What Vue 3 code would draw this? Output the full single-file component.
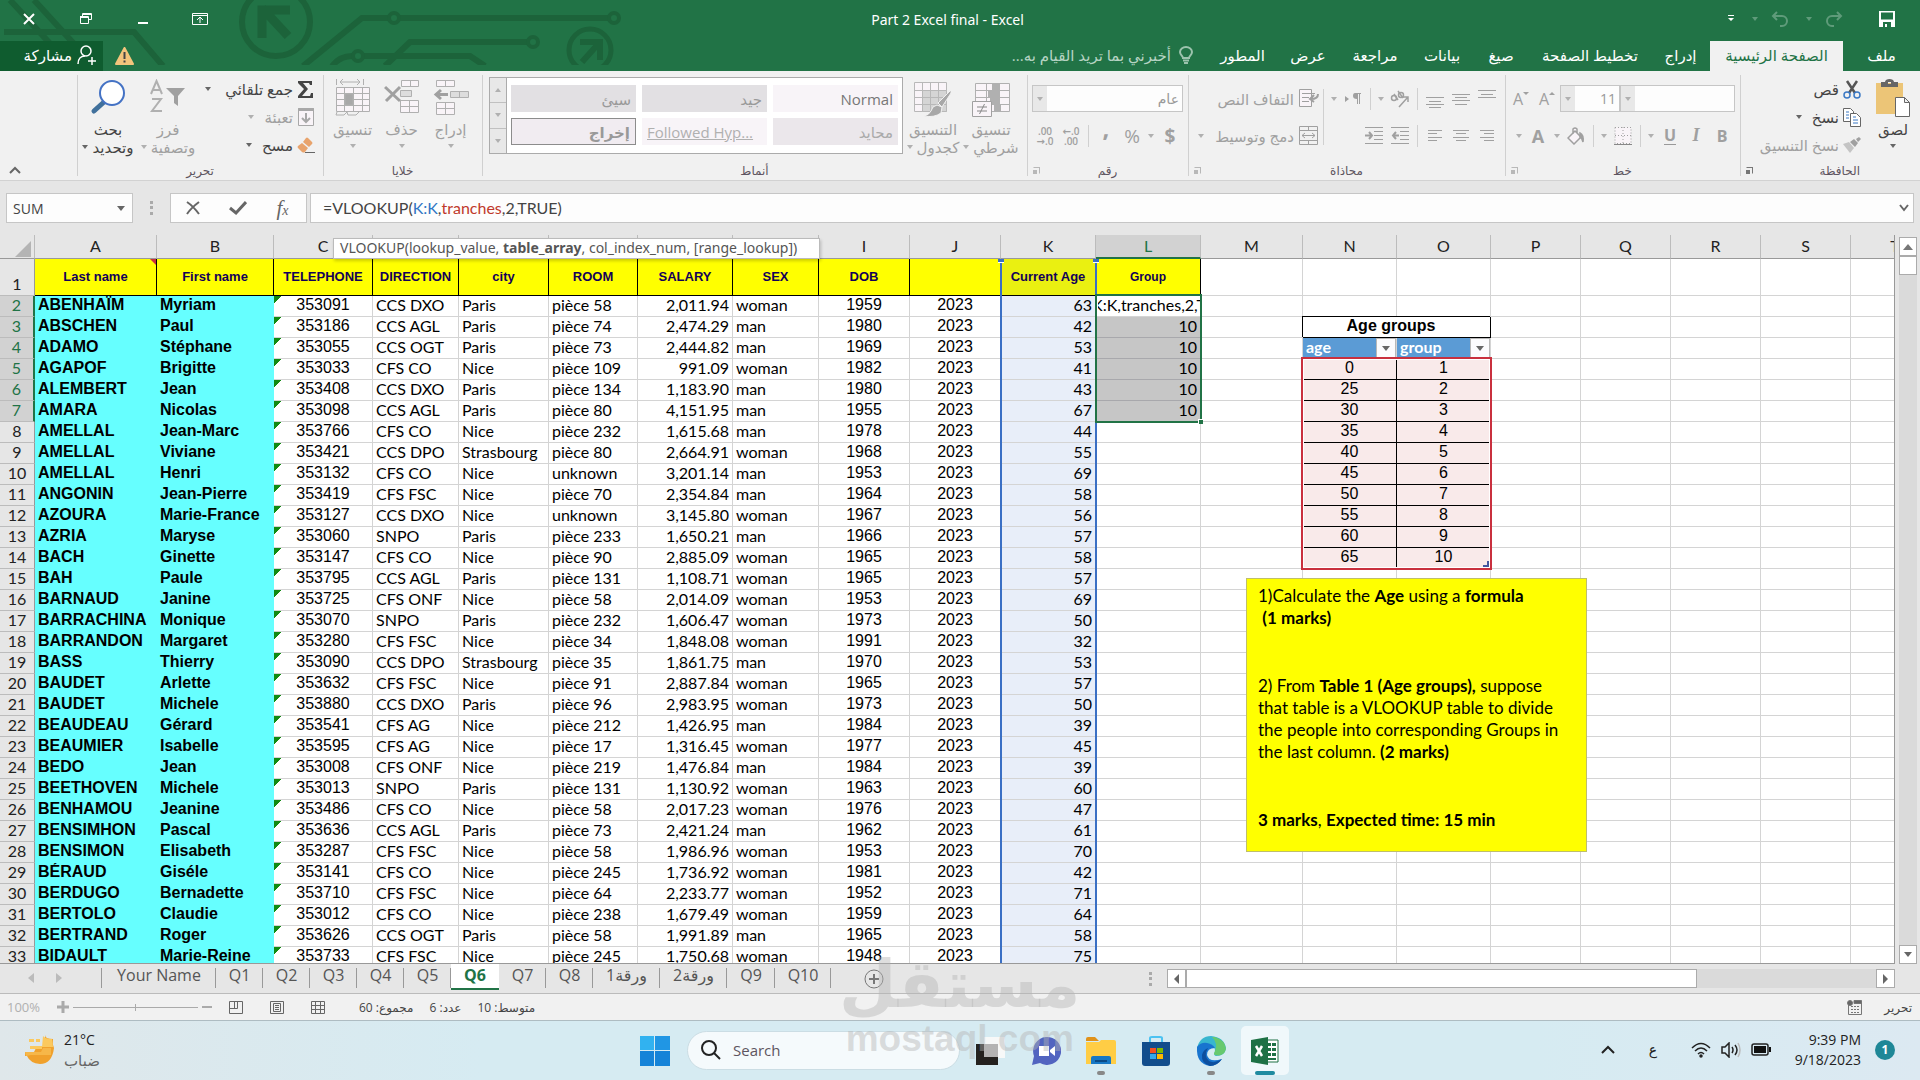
<script setup>
const cols = [
  ['A', 122], ['B', 117], ['C', 99], ['D', 86], ['E', 90], ['F', 89], ['G', 95], ['H', 86], ['I', 91], ['J', 91],
  ['K', 95], ['L', 105], ['M', 102], ['N', 94], ['O', 94], ['P', 90], ['Q', 90], ['R', 90], ['S', 90], ['T', 0],
]
const heads = ['Last name', 'First name', 'TELEPHONE', 'DIRECTION', 'city', 'ROOM', 'SALARY', 'SEX', 'DOB', '', 'Current Age', 'Group']

const people = `ABENHAÏM|Myriam|353091|CCS DXO|Paris|pièce 58|2,011.94|woman|1959|63
ABSCHEN|Paul|353186|CCS AGL|Paris|pièce 74|2,474.29|man|1980|42
ADAMO|Stéphane|353055|CCS OGT|Paris|pièce 73|2,444.82|man|1969|53
AGAPOF|Brigitte|353033|CFS CO|Nice|pièce 109|991.09|woman|1982|41
ALEMBERT|Jean|353408|CCS DXO|Paris|pièce 134|1,183.90|man|1980|43
AMARA|Nicolas|353098|CCS AGL|Paris|pièce 80|4,151.95|man|1955|67
AMELLAL|Jean-Marc|353766|CFS CO|Nice|pièce 232|1,615.68|man|1978|44
AMELLAL|Viviane|353421|CCS DPO|Strasbourg|pièce 80|2,664.91|woman|1968|55
AMELLAL|Henri|353132|CFS CO|Nice|unknown|3,201.14|man|1953|69
ANGONIN|Jean-Pierre|353419|CFS FSC|Nice|pièce 70|2,354.84|man|1964|58
AZOURA|Marie-France|353127|CCS DXO|Nice|unknown|3,145.80|woman|1967|56
AZRIA|Maryse|353060|SNPO|Paris|pièce 233|1,650.21|man|1966|57
BACH|Ginette|353147|CFS CO|Nice|pièce 90|2,885.09|woman|1965|58
BAH|Paule|353795|CCS AGL|Paris|pièce 131|1,108.71|woman|1965|57
BARNAUD|Janine|353725|CFS ONF|Nice|pièce 58|2,014.09|woman|1953|69
BARRACHINA|Monique|353070|SNPO|Paris|pièce 232|1,606.47|woman|1973|50
BARRANDON|Margaret|353280|CFS FSC|Nice|pièce 34|1,848.08|woman|1991|32
BASS|Thierry|353090|CCS DPO|Strasbourg|pièce 35|1,861.75|man|1970|53
BAUDET|Arlette|353632|CFS FSC|Nice|pièce 91|2,887.84|woman|1965|57
BAUDET|Michele|353880|CCS DXO|Paris|pièce 96|2,983.95|woman|1973|50
BEAUDEAU|Gérard|353541|CFS AG|Nice|pièce 212|1,426.95|man|1984|39
BEAUMIER|Isabelle|353595|CFS AG|Nice|pièce 17|1,316.45|woman|1977|45
BEDO|Jean|353008|CFS ONF|Nice|pièce 219|1,476.84|man|1984|39
BEETHOVEN|Michele|353013|SNPO|Paris|pièce 131|1,130.92|woman|1963|60
BENHAMOU|Jeanine|353486|CFS CO|Nice|pièce 58|2,017.23|woman|1976|47
BENSIMHON|Pascal|353636|CCS AGL|Paris|pièce 73|2,421.24|man|1962|61
BENSIMON|Elisabeth|353287|CFS FSC|Nice|pièce 58|1,986.96|woman|1953|70
BÉRAUD|Giséle|353141|CFS CO|Nice|pièce 245|1,736.92|woman|1981|42
BERDUGO|Bernadette|353710|CFS FSC|Nice|pièce 64|2,233.77|woman|1952|71
BERTOLO|Claudie|353012|CFS CO|Nice|pièce 238|1,679.49|woman|1959|64
BERTRAND|Roger|353626|CCS OGT|Paris|pièce 58|1,991.89|man|1965|58
BIDAULT|Marie-Reine|353733|CFS FSC|Nice|pièce 245|1,750.68|woman|1948|75`.split('\n').map(l => l.split('|'))

const ages = [0, 25, 30, 35, 40, 45, 50, 55, 60, 65]

function cellText(row, col, p) {
  if (col < 9) return p[col]
  if (col === 9) return '2023'
  if (col === 10) return p[9]
  if (col === 11 && row > 2 && row < 8) return '10'
  if (col === 13 && row > 4 && row < 15) return String(ages[row - 5])
  if (col === 14 && row > 4 && row < 15) return String(row - 4)
  return ''
}
function cellClass(row, col) {
  return {
    name: col < 2,
    num: col === 2 || col === 8 || col === 9,
    flag: col === 2,
    right: col === 6 || col === 10 || col === 11,
    age: col === 10,
    picked: col === 11 && row > 2 && row < 8,
    lookup: (col === 13 || col === 14) && row > 4 && row < 15,
  }
}

const tabs = [['إدراج', 59], ['تخطيط الصفحة', 122], ['صيغ', 56], ['بيانات', 62], ['مراجعة', 72], ['عرض', 62], ['المطور', 69]]
const sheets = [['Your Name', 114], ['Q1', 47], ['Q2', 47], ['Q3', 47], ['Q4', 47], ['Q5', 47], ['Q6', 48], ['Q7', 47], ['Q8', 47], ['ورقة1', 67], ['ورقة2', 67], ['Q9', 48], ['Q10', 56]]
</script>

<template>
  <div class="app">
    <header class="title">
      <svg class="art" viewBox="0 0 640 65" width="640" height="65" fill="none" stroke="#1c633a" stroke-width="6">
        <path d="M10 0L56 50M34 0L76 46M4 32H134L163 66M303 66L362 18H388M400 18H608M385 66L410 42H527M332 66Q340 56 352 56M364 56H470L485 66" />
        <circle cx="394" cy="18" r="5" stroke-width="4" /><circle cx="614" cy="18" r="5" stroke-width="4" />
        <circle cx="533" cy="42" r="5" stroke-width="4" /><circle cx="358" cy="56" r="5" stroke-width="4" />
        <circle cx="276" cy="22" r="34" /><path d="M262 38V10H290M262 8L288 36" stroke-width="9" />
        <circle cx="590" cy="50" r="21" stroke-width="5" /><path d="M580 42H600V60M600 42L582 62" stroke-width="6" />
      </svg>
      <div class="caption">
        <div class="wins">
          <button type="button" aria-label="Close"><svg width="16" height="16" viewBox="0 0 16 16" stroke="#fff" stroke-width="2"><path d="M3 3l10 10M13 3L3 13" /></svg></button>
          <button type="button" aria-label="Restore"><svg width="16" height="16" viewBox="0 0 16 16" fill="none" stroke="#fff"><path d="M4.500 5V2.500h9v6H11M2 5.500h8.500v7H2.500v-7M2.500 6.500h8M5 3.500h8" /></svg></button>
          <button type="button" aria-label="Minimize"><svg width="16" height="16" viewBox="0 0 16 16"><path d="M3 11h10v2H3z" fill="#fff" /></svg></button>
          <button type="button" aria-label="Ribbon options"><svg width="16" height="16" viewBox="0 0 16 16" fill="none" stroke="#fff"><path d="M.5 2.500h15v11H.5zM.5 4.500h15M8 12V6.500M5 9l3-3 3 3" /></svg></button>
        </div>
        <h1>Part 2 Excel final - Excel</h1>
        <div class="quick">
          <button type="button" aria-label="Customize"><svg width="8" height="10" viewBox="0 0 8 10" fill="#fff"><path d="M1 1h6v1H1zM1 4h6L4 7z" /></svg></button>
          <button type="button" class="dim undo" aria-label="Undo"><i class="caret"></i><svg width="18" height="16" viewBox="0 0 18 16" fill="none" stroke="currentColor" stroke-width="2"><path d="M6 1L2 5l4 4M2 5h9a5 5 0 010 10H9" /></svg></button>
          <button type="button" class="dim undo" aria-label="Redo"><i class="caret"></i><svg width="18" height="16" viewBox="0 0 18 16" fill="none" stroke="currentColor" stroke-width="2"><path d="M12 1l4 4-4 4M16 5H7a5 5 0 000 10h2" /></svg></button>
          <button type="button" class="save" aria-label="Save"><svg width="16" height="16" viewBox="0 0 16 16"><path fill="#fff" fill-rule="evenodd" d="M0 0h16v16H0zM2 1.500v7h12v-7zM4 11v5h2v-3h2v3h4v-5z" /></svg></button>
        </div>
      </div>
      <nav class="tabs" dir="rtl">
        <button type="button" class="file">ملف</button>
        <button type="button" class="tab on">الصفحة الرئيسية</button>
        <button v-for="t in tabs" :key="t[0]" type="button" class="tab" :style="{ width: t[1] + 'px' }">{{ t[0] }}</button>
        <button type="button" class="tell">
          <svg width="14" height="18" viewBox="0 0 14 18" fill="none" stroke="#9cc3ad" stroke-width="2"><path d="M4 12C4 10 1 9 1 6a6 5 0 0112 0c0 3-3 4-3 6zM4 14.500h6M5 17h4" /></svg>
          <span>أخبرني بما تريد القيام به...</span>
        </button>
        <span class="grow"></span>
        <button type="button" class="warn" aria-label="Warning"><svg width="19" height="18" viewBox="0 0 19 18"><path d="M9.500 1L18 17H1z" fill="#f3c47c" stroke="#f3c47c" stroke-width="2" stroke-linejoin="round" /><path d="M8.500 5h2v7h-2zM8.500 13.500h2v2h-2z" fill="#444" /></svg></button>
        <button type="button" class="share">
          <svg width="20" height="20" viewBox="0 0 20 20" fill="none" stroke="#fff" stroke-width="1.500"><circle cx="9" cy="6" r="5" /><path d="M1 19c0-5 3-8 7-8M15 12v8M11 16h8" /></svg>
          <span>مشاركة</span>
        </button>
      </nav>
    </header>

    <section class="ribbon" dir="rtl">
      <div class="group clip">
        <div class="body">
          <button type="button" class="big">
            <svg width="34" height="38" viewBox="0 0 34 38"><path fill="#ecc577" d="M0 4h27v31H0z" /><path fill="#666" d="M5 3h4c0-4 9-4 9 0h4v5H5zM12 3v2h3V3z" /><path fill="#fff" stroke="#666" d="M19.500 18.500h9l5 5v14h-14zM28.500 18.500v5h5" /></svg>
            <span>لصق</span><i class="caret"></i>
          </button>
          <div class="stack">
            <button type="button"><svg width="18" height="19" viewBox="0 0 18 19" fill="none"><path d="M4 1l8 12M14 1L6 13" stroke="#555" stroke-width="2.500" /><circle cx="4" cy="15" r="3" stroke="#3b79c4" stroke-width="1.500" /><circle cx="14" cy="15" r="3" stroke="#3b79c4" stroke-width="1.500" /></svg><span>قص</span></button>
            <button type="button"><svg width="18" height="19" viewBox="0 0 18 19" fill="#fff" stroke="#666"><path d="M.5.5h7l3 3v10H.5z" /><path d="M7.500 5.500h6l4 4v9h-10z" /><path stroke="#3b79c4" d="M3 4h3M3 7h3M3 10h3M10 9h3M10 12h5M10 15h5" /></svg><span>نسخ</span><i class="caret"></i></button>
            <button type="button" class="off"><svg width="18" height="16" viewBox="0 0 18 16"><path fill="#c4c4c4" d="M0 7l6-2 5 6-4 5z" /><path fill="#a0a0a0" d="M7 5l4-3 4 4-3 4zM13 2l3-2 2 2-3 3z" /></svg><span>نسخ التنسيق</span></button>
          </div>
        </div>
        <footer><span>الحافظة</span><i class="launch dark"></i></footer>
      </div>

      <div class="group font">
        <div class="body rows">
          <div class="line">
            <span class="combo name"><input type="text" aria-label="Font name" value=""><button type="button" aria-label="Fonts"><i class="caret"></i></button></span>
            <span class="combo size"><input type="text" aria-label="Font size" value="11"><button type="button" aria-label="Sizes"><i class="caret"></i></button></span>
            <button type="button" class="ic"><svg width="6" height="14" viewBox="0 0 6 14"><path d="M0 3h6L3 0z" fill="#a0a0a0" /></svg><span>A</span></button>
            <button type="button" class="ic"><svg width="6" height="14" viewBox="0 0 6 14"><path d="M0 0h6L3 3z" fill="#a0a0a0" /></svg><span>A</span></button>
          </div>
          <div class="line">
            <button type="button" class="ic"><b>B</b></button><button type="button" class="ic"><b class="it">I</b></button><button type="button" class="ic"><b class="un">U</b></button>
            <button type="button" class="dd" aria-label="Underline"><i class="caret"></i></button><i class="sep"></i>
            <button type="button" class="ic" aria-label="Borders"><svg width="18" height="18" viewBox="0 0 18 18" fill="none" stroke="#a0a0a0"><path fill="#f9f4f8" stroke-dasharray="1 2" d="M1 .5h16v16H1zM9 0v16M1 8.500h16" /><path stroke="#888" d="M0 17.500h18" /></svg></button>
            <button type="button" class="dd" aria-label="Border types"><i class="caret"></i></button><i class="sep"></i>
            <button type="button" class="ic" aria-label="Fill"><svg width="18" height="18" viewBox="0 0 18 18" fill="#f9f4f8" stroke="#a0a0a0" stroke-width="1.500"><path d="M1 11l7-7 6 6-7 7zM6 7V2q2-2 4 0v4" /><path fill="#a0a0a0" d="M13 6q4 2 3 9-1-4-3-5z" /></svg></button>
            <button type="button" class="dd" aria-label="Fill colours"><i class="caret"></i></button>
            <button type="button" class="ic"><b class="col">A</b></button><button type="button" class="dd" aria-label="Font colours"><i class="caret"></i></button>
          </div>
        </div>
        <footer><span>خط</span><i class="launch"></i></footer>
      </div>

      <div class="group align">
        <div class="body rows">
          <div class="wrap">
            <div class="tools">
              <div class="line">
                <button type="button" class="ic" aria-label="Top"><svg width="18" height="18" viewBox="0 0 18 18" stroke="#a0a0a0"><path d="M0 .5h18M3 4.500h12M0 7.500h18" /></svg></button>
                <button type="button" class="ic" aria-label="Middle"><svg width="18" height="18" viewBox="0 0 18 18" stroke="#a0a0a0"><path d="M0 4.500h18M3 7.500h12M0 10.500h18M3 14.500h12" /></svg></button>
                <button type="button" class="ic" aria-label="Bottom"><svg width="18" height="18" viewBox="0 0 18 18" stroke="#a0a0a0"><path d="M0 7.500h18M3 11.500h12M0 14.500h18M3 17.500h12" /></svg></button>
                <i class="sep"></i>
                <button type="button" class="ic" aria-label="Orientation"><svg width="20" height="18" viewBox="0 0 20 18" fill="none" stroke="#a0a0a0" stroke-width="1.500"><circle cx="4" cy="8" r="2.500" /><path d="M4 4l4 6M8 1l5 7" /><circle cx="11" cy="5" r="2.500" /><path d="M9 17l9-10M13 7h5v5" /></svg></button>
                <button type="button" class="dd" aria-label="Orientations"><i class="caret"></i></button><i class="sep"></i>
                <button type="button" class="ic" aria-label="Direction"><svg width="18" height="14" viewBox="0 0 18 14" fill="#a0a0a0"><path d="M1 4l4 3-4 3zM11 1h6v1h-1v10h-1V2h-1v10h-1V7q-4 0-4-3t2-3z" /></svg></button>
                <button type="button" class="dd" aria-label="Directions"><i class="caret"></i></button>
              </div>
              <div class="line">
                <button type="button" class="ic" aria-label="Align right"><svg width="14" height="13" viewBox="0 0 14 13" stroke="#a0a0a0"><path d="M0 1.500h14M4 4.500h10M0 8.500h14M4 11.500h10" /></svg></button>
                <button type="button" class="ic" aria-label="Centre"><svg width="16" height="13" viewBox="0 0 16 13" stroke="#a0a0a0"><path d="M0 1.500h16M3 4.500h10M0 8.500h16M3 11.500h10" /></svg></button>
                <button type="button" class="ic" aria-label="Align left"><svg width="14" height="13" viewBox="0 0 14 13" stroke="#a0a0a0"><path d="M0 1.500h14M0 4.500h9M0 8.500h14M0 11.500h9" /></svg></button>
                <i class="sep"></i>
                <button type="button" class="ic" aria-label="Decrease indent"><svg width="18" height="17" viewBox="0 0 18 17" fill="none" stroke="#a0a0a0"><path d="M0 .5h18M9 4.500h9M9 8.500h9M9 12.500h9M0 16.500h18" /><path stroke-width="2" d="M8 8.500H2M5 5L2 8.500 5 12" /></svg></button>
                <button type="button" class="ic" aria-label="Increase indent"><svg width="18" height="17" viewBox="0 0 18 17" fill="none" stroke="#a0a0a0"><path d="M0 .5h18M9 4.500h9M9 8.500h9M9 12.500h9M0 16.500h18" /><path stroke-width="2" d="M0 8.500h6M4 5l3 3.500L4 12" /></svg></button>
              </div>
            </div>
            <i class="sep tall"></i>
            <div class="tools">
              <button type="button" class="line word off"><svg width="20" height="19" viewBox="0 0 20 19" fill="#f9f4f8" stroke="#a0a0a0"><path d="M.5.5h12v17H.5zM3 4.500h13M3 8.500h7M3 12.500h7" /><path fill="none" stroke-width="2" d="M19 5q0 5-7 5M15 6l-4 4 4 3" /></svg><span>التفاف النص</span></button>
              <button type="button" class="line word off"><svg width="20" height="19" viewBox="0 0 20 19" fill="none" stroke="#a0a0a0"><path d="M.5.5h18v18H.5zM.5 4.500h18M.5 14.500h18M9.500 0v5M9.500 14v5M3 9.500h13M6 7L3 9.500 6 12M13 7l3 2.500-3 2.500" /></svg><span>دمج وتوسيط</span><i class="caret"></i></button>
            </div>
          </div>
        </div>
        <footer><span>محاذاة</span><i class="launch"></i></footer>
      </div>

      <div class="group number">
        <div class="body rows">
          <div class="line"><span class="combo fmt"><input type="text" aria-label="Number format" value="عام"><button type="button" aria-label="Formats"><i class="caret"></i></button></span></div>
          <div class="line">
            <button type="button" class="ic"><b class="cur">$</b></button><button type="button" class="dd" aria-label="Currencies"><i class="caret"></i></button>
            <button type="button" class="ic"><span class="cur">%</span></button><button type="button" class="ic"><b class="com">,</b></button><i class="sep"></i>
            <button type="button" class="ic dec"><span dir="ltr">←.0<br>.00</span></button><button type="button" class="ic dec"><span dir="ltr">.00<br>→.0</span></button>
          </div>
        </div>
        <footer><span>رقم</span><i class="launch"></i></footer>
      </div>

      <div class="group styles">
        <div class="body">
          <button type="button" class="big off wide">
            <svg width="38" height="38" viewBox="0 0 38 38" fill="#f9f4f8" stroke="#b0b0b0"><path d="M3.500 4.500h34v28h-34z" /><path fill="#b0b0b0" stroke="none" d="M20 5h7v7h-7zM16 12h11v7H16zM18 19h10v7H18zM22 26h7v6h-7z" /><path fill="none" d="M3 11.500h34M3 18.500h34M3 25.500h34M14.500 4v28M27.500 4v28" /><path stroke="#a0a0a0" d="M.5 22.500h19v15H.5z" /><path stroke="#888" fill="none" d="M5 28h10M5 32h10M12.500 25l-5 10" /></svg>
            <span>تنسيق</span><span class="w">شرطي<i class="caret"></i></span>
          </button>
          <button type="button" class="big off wide">
            <svg width="38" height="38" viewBox="0 0 38 38" fill="#f9f4f8" stroke="#b8b8b8"><path d="M.5 3.500h32v29H.5z" /><path fill="#d5d5d5" d="M8.500 11.500h24v21h-24z" /><path fill="none" d="M0 11.500h32M0 18.500h32M0 25.500h32M8.500 3v29M16.500 3v29M24.500 3v29" /><path fill="#a8a8a8" stroke="#f1f1f1" d="M37 11L24 24l4 4 9-14zM23 26q-5 1-6 6-2 4-7 5 10 2 17-3l1-6z" /></svg>
            <span>التنسيق</span><span class="w">كجدول<i class="caret"></i></span>
          </button>
          <div class="gallery">
            <div class="samples">
              <button type="button" dir="ltr" class="norm">Normal</button><button type="button" class="good">جيد</button><button type="button" class="good">سيئ</button>
              <button type="button" class="neu">محايد</button><button type="button" dir="ltr" class="hyp">Followed Hyp...</button><button type="button" class="out">إخراج</button>
            </div>
            <div class="spin"><button type="button" aria-label="Up"><i class="caret up"></i></button><button type="button" aria-label="Down"><i class="caret"></i></button><button type="button" aria-label="More"><i class="caret more"></i></button></div>
          </div>
        </div>
        <footer><span>أنماط</span></footer>
      </div>

      <div class="group cells">
        <div class="body">
          <button type="button" class="big off"><svg width="36" height="38" viewBox="0 0 36 38" fill="#f9f4f8" stroke="#b0b0b0"><path d="M3.500 1.500h18v6h-18zM12.500 1v7M3.500 23.500h18v12h-18zM12.500 23v12M3 29.500h18" /><path fill="#ddd" d="M17.500 12.500h18v6h-18zM26.500 12v7" /><path fill="none" stroke="#a0a0a0" stroke-width="3" d="M15 15.500H3M8 11l-5 4.500L8 20" /></svg><span>إدراج</span><i class="caret"></i></button>
          <button type="button" class="big off"><svg width="36" height="38" viewBox="0 0 36 38" fill="#f9f4f8" stroke="#b0b0b0"><path d="M17.500 1.500h17v6h-17zM26.500 1v7M16.500 21.500h18v12h-18zM25.500 21v12M16 27.500h18" /><path fill="#ddd" d="M16.500 11.500h11v6h-11z" /><path fill="none" stroke="#a0a0a0" stroke-width="3" d="M1 8l15 14M16 8L2 22" /></svg><span>حذف</span><i class="caret"></i></button>
          <button type="button" class="big off"><svg width="36" height="38" viewBox="0 0 36 38" fill="#f9f4f8" stroke="#b0b0b0"><path d="M1.500 8.500h33v24h-33z" /><path fill="none" d="M1 14.500h33M1 20.500h33M1 26.500h33M9.500 8v24M18.500 8v24M27.500 8v24M2 33l-1 3h8l3-3 1 3h8l3-3M1.500 0v6M28.500 0v6M5 3h20M8 0L5 3l3 3M22 0l3 3-3 3" /><path fill="#a8a8a8" d="M10 15h8v11h-8z" /></svg><span>تنسيق</span><i class="caret"></i></button>
        </div>
        <footer><span>خلايا</span></footer>
      </div>

      <div class="group editing">
        <div class="body">
          <div class="stack">
            <button type="button"><svg width="18" height="17" viewBox="0 0 18 17"><path d="M1 0h14v4h-2l-1-2H6l5 6-6 7h8l1-3h2v5H1v-2l6-7-6-6z" fill="#444" /></svg><span>جمع تلقائي</span><i class="caret wide-gap"></i></button>
            <button type="button" class="off"><svg width="18" height="18" viewBox="0 0 18 18" fill="#f9f4f8" stroke="#a8a8a8"><path d="M1.500.5h15v17h-15z" /><path fill="#a8a8a8" d="M1.500.5h15v2h-15z" /><path fill="none" stroke-width="2" d="M9 5v9M5 10l4 4 4-4" /></svg><span>تعبئة</span><i class="caret"></i></button>
            <button type="button"><svg width="18" height="17" viewBox="0 0 18 17"><path d="M9 1q1-1 2 0l4 4q1 1 0 2l-3 3-6-5z" fill="#e8a36c" /><path d="M5 6l6 5-3 4q-1 1-3 0l-4-4q-1-1 0-2z" fill="#e8a36c" /><path d="M8 15.500h10" stroke="#666" /></svg><span>مسح</span><i class="caret"></i></button>
          </div>
          <button type="button" class="big off sort"><svg width="36" height="38" viewBox="0 0 36 38"><path fill="none" stroke="#b0b0b0" stroke-width="2" d="M1 15L6.500 2 12 15M3 11h7M2 20h9L2 32h10" /><path fill="#a0a0a0" d="M16 9h19l-7 8v10l-4-3v-7z" /></svg><span>فرز</span><span class="w">وتصفية<i class="caret"></i></span></button>
          <button type="button" class="big find"><svg width="36" height="38" viewBox="0 0 36 38"><path stroke="#41719c" stroke-width="5" stroke-linecap="round" d="M4 32l10-9" /><circle cx="22" cy="14" r="12" fill="#fff" stroke="#4472c4" stroke-width="2" /></svg><span>بحث</span><span class="w">وتحديد<i class="caret"></i></span></button>
        </div>
        <footer><span>تحرير</span></footer>
      </div>
      <span class="grow"></span>
      <button type="button" class="fold" aria-label="Collapse ribbon"><svg width="12" height="8" viewBox="0 0 12 8" fill="none" stroke="#666" stroke-width="2"><path d="M1 7l5-5 5 5" /></svg></button>
    </section>

    <section class="fbar">
      <div class="namebox"><input type="text" aria-label="Name box" value="SUM"><button type="button" aria-label="Names"><i class="caret dk"></i></button></div>
      <i class="dots"></i>
      <div class="fbtns">
        <button type="button" aria-label="Cancel"><svg width="16" height="16" viewBox="0 0 16 16" stroke="#666" stroke-width="2" fill="none"><path d="M2 2q6 4 12 12M14 2Q6 8 2 14" /></svg></button>
        <button type="button" aria-label="Enter"><svg width="18" height="16" viewBox="0 0 18 16" stroke="#666" stroke-width="3" fill="none"><path d="M1 8l6 5L17 2" /></svg></button>
        <button type="button" class="fx" aria-label="Insert function">f<small>x</small></button>
      </div>
      <div class="formula"><div role="textbox" aria-label="Formula" contenteditable="true">=VLOOKUP(<span class="blue">K:K</span>,<span class="red">tranches</span>,2,TRUE)</div><button type="button" aria-label="Expand"><svg width="10" height="8" viewBox="0 0 10 8" fill="none" stroke="#666" stroke-width="2"><path d="M1 1l4 5 4-5" /></svg></button></div>
    </section>

    <main class="work">
      <div class="sheet">
        <table class="grid">
          <colgroup><col class="c0"><col v-for="c in cols" :key="c[0]" :style="c[1] ? { width: c[1] + 'px' } : {}"></colgroup>
          <thead>
            <tr><th class="corner"><svg width="16" height="16" viewBox="0 0 16 16"><path d="M16 0v16H0z" fill="#b4b4b4" /></svg></th><th v-for="c in cols" :key="c[0]" scope="col" :class="{ on: c[0] === 'L' }">{{ c[0] }}</th></tr>
          </thead>
          <tbody>
            <tr class="first"><th scope="row">1</th><td v-for="(c, i) in cols" :key="i" :class="{ head: i < 12, cur: i === 10, small: i === 11 }"><i v-if="i === 0" class="mark"></i>{{ heads[i] }}</td></tr>
            <tr v-for="(p, r) in people" :key="r">
              <th scope="row" :class="{ on: r < 6 }">{{ r + 2 }}</th>
              <template v-for="(c, i) in cols" :key="i">
                <td v-if="r === 1 && i === 13" colspan="2" class="tt">Age groups</td>
                <td v-else-if="r === 2 && (i === 13 || i === 14)" class="filter"><div><span>{{ i === 13 ? 'age' : 'group' }}</span><button type="button" aria-label="Filter"><i class="caret dk"></i></button></div></td>
                <td v-else-if="!(r === 1 && i === 14)" :class="cellClass(r + 2, i)">{{ cellText(r + 2, i, p) }}</td>
              </template>
            </tr>
          </tbody>
        </table>
        <div class="krange"><i></i><i></i></div>
        <div class="edit"><span>K:K,tranches,2,T</span></div>
        <div class="lrange"></div>
        <div class="rrange"></div>
        <div class="tip">VLOOKUP(lookup_value, <b>table_array</b>, col_index_num, [range_lookup])</div>
        <aside class="note">
          <p>1)Calculate the <b>Age</b> using a <b>formula</b><br>&nbsp;<b>(1 marks)</b></p>
          <p>2) From <b>Table 1 (Age groups),</b> suppose<br>that table is a VLOOKUP table to divide<br>the people into corresponding Groups in<br>the last column. <b>(2 marks)</b></p>
          <p><b>3 marks</b>, <b>Expected time: 15 min</b></p>
        </aside>
      </div>
      <div class="vscroll"><button type="button" aria-label="Scroll up"><i class="caret up dk"></i></button><i class="thumb"></i><span class="track"></span><button type="button" aria-label="Scroll down"><i class="caret dk"></i></button></div>
    </main>

    <nav class="sheets">
      <div class="arrows"><button type="button" aria-label="Previous"><svg width="6" height="10" viewBox="0 0 6 10"><path d="M6 0v10L0 5z" fill="#bbb" /></svg></button><button type="button" aria-label="Next"><svg width="6" height="10" viewBox="0 0 6 10"><path d="M0 0v10l6-5z" fill="#bbb" /></svg></button></div>
      <button v-for="s in sheets" :key="s[0]" type="button" class="stab" :class="{ on: s[0] === 'Q6' }" :style="{ width: s[1] + 'px' }">{{ s[0] }}</button>
      <button type="button" class="add" aria-label="New sheet"><svg width="20" height="20" viewBox="0 0 20 20" fill="none" stroke="#777"><circle cx="10" cy="10" r="9" /><path stroke-width="2" d="M5 10h10M10 5v10" /></svg></button>
      <span class="grow"></span>
      <div class="hscroll"><i class="dots"></i><button type="button" aria-label="Scroll left"><svg width="5" height="10" viewBox="0 0 5 10"><path d="M5 0v10L0 5z" fill="#666" /></svg></button><span class="thumb"></span><span class="track"></span><button type="button" aria-label="Scroll right"><svg width="5" height="10" viewBox="0 0 5 10"><path d="M0 0v10l5-5z" fill="#666" /></svg></button></div>
    </nav>

    <section class="status">
      <span class="pct">100%</span>
      <button type="button" class="plus" aria-label="Zoom in"><svg width="12" height="12" viewBox="0 0 12 12" stroke="#aaa" stroke-width="3"><path d="M0 6h12M6 0v12" /></svg></button>
      <input type="range" aria-label="Zoom" min="10" max="400" value="100">
      <button type="button" class="minus" aria-label="Zoom out"><svg width="10" height="12" viewBox="0 0 10 12" stroke="#aaa" stroke-width="2"><path d="M0 6h10" /></svg></button>
      <div class="views">
        <button type="button" aria-label="Page break view"><svg width="14" height="13" viewBox="0 0 14 13" fill="none" stroke="#666"><path d="M.5.5h13v12H.5zM.5 7.500h8v-7M5.500.5v7" /></svg></button>
        <button type="button" aria-label="Page layout view"><svg width="14" height="13" viewBox="0 0 14 13" fill="none" stroke="#666"><path d="M.5.5h13v12H.5zM3.500 2.500h7v8h-7zM5 4.500h4M5 6.500h4M5 8.500h4" /></svg></button>
        <button type="button" aria-label="Normal view"><svg width="14" height="13" viewBox="0 0 14 13" fill="none" stroke="#666"><path d="M.5.5h13v12H.5zM.5 4.500h13M.5 8.500h13M4.500 0v13M9.500 0v13" /></svg></button>
      </div>
      <div class="sums"><span dir="rtl">مجموع: 60</span><span dir="rtl">عدد: 6</span><span dir="rtl">متوسط: 10</span></div>
      <span class="grow"></span>
      <svg width="15" height="15" viewBox="0 0 15 15" fill="none" stroke="#777"><path d="M1.500 4v10.500h13V2.500" /><path d="M4 6.500h9M4 9.500h9M4 12.500h9" stroke-dasharray="2 1" /><path fill="#666" d="M7 .5h7.500v3H7z" /><circle cx="3" cy="3" r="2.500" fill="#666" /></svg>
      <span class="mode">تحرير</span>
    </section>

    <footer class="taskbar">
      <button type="button" class="weather">
        <svg width="30" height="30" viewBox="0 0 30 30"><path d="M20 0q0 4 8 4-1 5 1 9-2 16-14 16Q5 28 2 21h-2v-4h9l3-6h8z" fill="#f0a12c" /><path d="M18 1q2 3 9 3l1 8H17zM4 4h5v3H4zM11 4h4v3h-4zM5 11h12v3H5z" fill="#fbc95e" /><path d="M0 17h16l2-4h8v7H6l-5 1z" fill="#f6b749" /></svg>
        <span>21°C<br><em>ضباب</em></span>
      </button>
      <div class="apps">
        <button type="button" class="app-btn" aria-label="Start"><svg width="30" height="30" viewBox="0 0 30 30"><path d="M0 0h14v14H0zM15 0h15v14H15zM0 15h14v15H0zM15 15h15v15H15z" fill="#1583d8" /><path d="M0 0h14v14H0z" fill="#31b2f0" /><path d="M15 0h15v14H15z" fill="#2096e4" /></svg></button>
        <label class="search"><svg width="20" height="20" viewBox="0 0 20 20" fill="none" stroke="#222" stroke-width="2"><circle cx="8" cy="8" r="7" /><path d="M13 13l6 6" /></svg><input type="text" placeholder="Search" aria-label="Search"></label>
        <button type="button" class="app-btn" aria-label="Task view"><svg width="30" height="30" viewBox="0 0 30 30"><path d="M8 1h21v21H8z" fill="#f7f8f8" /><path d="M0 8h22v21H0z" fill="#24211f" /><path d="M8 8h14v13H8z" fill="#b4b3b3" /></svg></button>
        <button type="button" class="app-btn" aria-label="Chat"><svg width="30" height="30" viewBox="0 0 30 30"><path d="M15 1a14 14 0 11-6 26l-8 2 2-9A14 14 0 0115 1z" fill="#5264c0" /><path d="M8 10h10v10H8zM19 14l5-4v10l-5-4z" fill="#fff" /></svg></button>
        <button type="button" class="app-btn run" aria-label="File Explorer"><svg width="30" height="30" viewBox="0 0 30 30"><path d="M0 3q0-2 2-2h7l4 4H0z" fill="#e0921a" /><path d="M0 6h13l2-2h13q2 0 2 2v22H0z" fill="#ffcd45" /><path d="M5 28v-6q0-2 2-2h16q2 0 2 2v6z" fill="#1777c4" /><path d="M9 24h12v2H9z" fill="#0a4a86" /></svg></button>
        <button type="button" class="app-btn" aria-label="Store"><svg width="30" height="30" viewBox="0 0 30 30"><path d="M9 7V2q0-1 2-1h8q2 0 2 1v5" fill="none" stroke="#4cc2f1" stroke-width="2" /><path d="M1 6h28v21q0 3-3 3H4q-3 0-3-3z" fill="#124d8c" /><path d="M9 12h6v5H9z" fill="#f25022" /><path d="M16 12h6v5h-6z" fill="#7fba00" /><path d="M9 18h6v5H9z" fill="#35a8ec" /><path d="M16 18h6v5h-6z" fill="#ffb900" /></svg></button>
        <button type="button" class="app-btn run" aria-label="Edge"><svg width="30" height="30" viewBox="0 0 30 30"><path d="M1 12Q4 0 15 0q13 1 15 12-1 8-10 8-3-1-1-4 0-8-8-8-7 0-10 4z" fill="#38b6cf" /><path d="M19 1q10 3 11 12-2 8-11 6-2-1 0-4 3-8-3-14z" fill="#67c96f" /><path d="M1 11q4-5 10-4 6 1 8 5-8 0-8 7 2 8 15 4-5 7-12 7Q0 28 1 11z" fill="#1874cf" /><path d="M12 12q-5 8 1 13 5 3 13-2-5 7-12 7-9-3-8-11 1-5 6-7z" fill="#0d4f9e" /></svg></button>
        <button type="button" class="app-btn tile" aria-label="Excel"><svg width="28" height="28" viewBox="0 0 28 28"><path d="M14 3h13v22H14z" fill="#fff" stroke="#1e7145" /><path d="M16 6h4v3h-4zM21 6h4v3h-4zM16 11h4v3h-4zM21 11h4v3h-4zM16 16h4v3h-4zM21 16h4v3h-4zM16 21h9v2h-9z" fill="#1e7145" /><path d="M0 3l17-3v28L0 25z" fill="#1e7145" /><path d="M5 9l6 10M11 9L5 19" stroke="#fff" stroke-width="2.500" /></svg></button>
      </div>
      <div class="tray">
        <button type="button" class="up-btn" aria-label="Hidden icons"><svg width="14" height="9" viewBox="0 0 14 9" fill="none" stroke="#222" stroke-width="2"><path d="M1 8l6-6 6 6" /></svg></button>
        <button type="button" class="lang">ع</button>
        <button type="button" class="net" aria-label="Network, sound and battery">
          <svg width="20" height="16" viewBox="0 0 20 16" fill="none" stroke="#222" stroke-width="1.500"><path d="M1 6q9-9 18 0M4 9q6-6 12 0M7 12q3-3 6 0" /><circle cx="10" cy="14" r="1" fill="#222" /></svg>
          <svg width="20" height="16" viewBox="0 0 20 16" fill="none" stroke="#222" stroke-width="1.500"><path d="M1 5h3l4-4v14l-4-4H1zM11 5q2 3 0 6M14 3q4 5 0 10" /><path stroke="#bbb" d="M17 1q4 7 0 14" /></svg>
          <svg width="20" height="14" viewBox="0 0 20 14"><rect x="1" y="1" width="16" height="11" rx="2" fill="none" stroke="#222" stroke-width="1.500" /><path d="M3 3h12v7H3zM18 4h2v5h-2z" fill="#111" /></svg>
        </button>
        <button type="button" class="clock">9:39 PM<br>9/18/2023</button>
        <button type="button" class="badge">1</button>
      </div>
    </footer>

    <div class="mark-logo" aria-hidden="true"><b>مستقل</b><span>mostaql.com</span></div>
  </div>
</template>

<style>
body { margin: 0; overflow: hidden; }
</style>

<style scoped>
* { box-sizing: border-box; }
.app { position: relative; display: flex; flex-direction: column; height: 100vh; overflow: hidden; background: #e6e6e6; font-family: "Open Sans", "Noto Sans", "DejaVu Sans", sans-serif; font-size: 15px; color: #444; }
button { margin: 0; padding: 0; border: 0; background: none; font: inherit; color: inherit; display: flex; align-items: center; justify-content: center; white-space: nowrap; }
input { border: 0; padding: 0; margin: 0; background: none; font: inherit; color: inherit; min-width: 0; outline: 0; }
svg { display: block; flex: none; }
.grow { flex: 1; }
.caret { flex: none; width: 0; height: 0; border: 3px solid transparent; border-top: 4px solid #b0b0b0; border-bottom: 0; }
.caret.up { border-top: 0; border-bottom: 4px solid #b0b0b0; }
.caret.dk { border-width: 5px 4px 0; border-top-color: #666; }
.caret.up.dk { border-width: 0 5px 6px; border-bottom-color: #777; }

.title { position: relative; height: 71px; flex: none; background: #217346; color: #fff; display: flex; flex-direction: column; justify-content: space-between; }
.art { position: absolute; left: 0; top: 0; }
.caption { position: relative; display: flex; align-items: center; height: 38px; }
.wins, .quick { flex: 1; display: flex; }
.wins button { width: 57px; height: 38px; }
.caption h1 { margin: 0; padding: 2px 20px 0 0; font: 400 14px/38px "Noto Sans", "Open Sans", sans-serif; position: relative; left: 10px; }
.quick { justify-content: flex-end; align-items: center; padding-right: 25px; }
.quick .undo { width: 54px; gap: 13px; justify-content: flex-end; }
.quick .save { margin-left: 36px; }
.quick .dim { color: #5f9b7a; }
.dim .caret { border-top-color: #5f9b7a; }
.tabs { position: relative; display: flex; height: 30px; align-items: stretch; }
.tabs button { padding-bottom: 3px; }
.tabs .file { width: 77px; }
.tabs .tab.on { width: 133px; background: #f1f1f1; color: #217346; }
.tabs .tell { gap: 8px; color: #b6d3c3; padding-right: 15px; }
.tabs .warn { padding: 0 0 0 12px; }
.share { width: 103px; background: #0f5c2f; gap: 5px; }
.tabs .share { justify-content: flex-start; padding-right: 6px; }

.ribbon { flex: none; height: 110px; background: #f1f1f1; border-bottom: 1px solid #d2d2d2; display: flex; }
.group { position: relative; display: flex; flex-direction: column; flex: none; padding-top: 4px; }
.group::after { content: ""; position: absolute; left: 0; top: 4px; bottom: 4px; width: 1px; background: #d0d0d0; }
.clip { width: 180px; } .font { width: 235px; } .align { width: 317px; } .number { width: 161px; } .styles { width: 545px; } .cells { width: 159px; } .editing { width: 246px; }
.body { flex: 1; display: flex; align-items: flex-start; }
.body.rows { flex-direction: column; padding: 10px 5px 0; gap: 10px; }
.group footer { height: 18px; line-height: 16px; font-size: 12px; color: #5e5560; display: flex; justify-content: center; align-items: center; }
.launch { position: absolute; left: 6px; bottom: 6px; width: 7px; height: 7px; border: 1px solid #b8b8b8; border-left-color: transparent; border-bottom-color: transparent; }
.launch::after { content: ""; position: absolute; left: -1px; bottom: -1px; width: 4px; height: 4px; background: #b8b8b8; }
.launch.dark { border-top-color: #777; border-right-color: #777; }
.launch.dark::after { background: #777; }
.off { color: #a0a0a0; }
.big { flex-direction: column; justify-content: flex-start; width: 49px; padding-top: 4px; }
.big > span { line-height: 18px; }
.big > svg { margin-bottom: 3px; }
.big > .caret { margin-top: 6px; }
.clip .caret, .editing .find .caret, .editing .stack button:not(.off) .caret { border-top-color: #666; }
.w { display: flex; align-items: center; gap: 4px; }
.clip .body { padding-right: 7px; }
.clip .big { width: 40px; }
.clip footer { justify-content: flex-start; padding-right: 60px; }
.stack { display: flex; flex-direction: column; padding-right: 12px; }
.stack button { height: 28px; justify-content: flex-start; gap: 4px; }
.stack .caret { margin-right: 6px; }
.line { display: flex; align-items: center; height: 27px; }
.wrap { display: flex; }
.tools { display: flex; flex-direction: column; gap: 10px; }
.ic { width: 26px; height: 27px; color: #a0a0a0; font-size: 16px; }
.dd { width: 12px; height: 27px; }
.sep { width: 1px; height: 22px; margin: 0 4px; background: #d0d0d0; }
.sep.tall { height: 56px; margin-top: 4px; }
.it { font-style: italic; font-family: "Liberation Serif", serif; font-size: 18px; }
.un { border-bottom: 1px solid #999; line-height: 18px; }
.col { font-size: 18px; }
.cur { font-size: 19px; }
.com { font-size: 24px; line-height: 14px; padding-bottom: 16px; }
.dec { font-size: 10px; line-height: 10px; font-weight: 600; }
.word { gap: 5px; justify-content: flex-start; }
.word .caret { margin-right: 6px; }
.combo { display: flex; height: 27px; border: 1px solid #c6c6c6; background: #fdfdfd; color: #999; font-size: 14px; }
.combo input { flex: 1; padding: 0 3px; }
.combo button { width: 14px; background: #e8e8e8; }
.combo.name { width: 115px; } .combo.size { width: 60px; } .combo.fmt { width: 151px; }
.styles .body { padding-right: 7px; }
.wide { width: 58px; }
.gallery { display: flex; margin: 2px 1px 0 0; border: 1px solid #ababab; height: 77px; }
.samples { background: #fff; display: grid; grid-template-columns: repeat(3, 125px); grid-template-rows: 27px 27px; gap: 6px; padding: 7px 4px; }
.samples button { justify-content: flex-start; padding: 0 5px; color: #999; overflow: hidden; }
.samples .norm { background: #f8f4f8; color: #777; justify-content: flex-end; }
.samples .good { background: #e2e0e3; }
.samples .neu { background: #ebe7eb; color: #aaa; }
.samples .hyp { background: #f8f4f8; color: #b0b0b0; text-decoration: underline; }
.samples .out { background: #f1ecf1; border: 1px solid #8c8c8c; font-weight: 700; }
.spin { width: 17px; display: grid; border-right: 1px solid #ababab; background: #e8e8e8; }
.spin button + button { border-top: 1px solid #c0c0c0; }
.more { box-shadow: 0 -7px 0 -3px #b0b0b0; }
.cells .body { padding-right: 7px; }
.editing .stack { width: 126px; padding-right: 8px; }
.stack .wide-gap { margin-right: 10px; }
.sort { width: 58px; } .find { width: 62px; }
.fold { align-self: flex-end; margin: 0 0 6px 9px; }

.fbar { flex: none; display: flex; height: 54px; padding: 12px 6px; }
.fbar > div { display: flex; background: #fdfdfd; border: 1px solid #c6c6c6; }
.namebox { width: 127px; padding: 0 7px 0 6px; align-items: center; }
.namebox input { flex: 1; font-size: 14px; }
.dots { width: 3px; margin: 8px 17px; border-left: 3px dotted #aaa; }
.fbtns { width: 137px; }
.fbtns button { flex: 1; padding-right: 2px; }
.fx { font: italic 21px "Liberation Serif", serif; color: #666; }
.fx small { font-size: 14px; padding-top: 6px; }
.formula { flex: 1; margin-left: 3px; padding: 0 4px 0 12px; align-items: center; justify-content: space-between; }
.formula [role] { flex: 1; outline: 0; padding-bottom: 2px; font-family: Lato, "Open Sans", sans-serif; font-size: 16px; }
.blue { color: #2f75c4; } .red { color: #c0392b; }

.work { flex: 1; min-height: 0; display: flex; font-family: Lato, "Open Sans", sans-serif; font-size: 16px; color: #000; }
.sheet { position: relative; flex: 1; min-width: 0; overflow: hidden; border-bottom: 1px solid #999; }
.grid { width: calc(100% + 46px); table-layout: fixed; border-collapse: separate; border-spacing: 0; background: #fff; }
.c0 { width: 35px; }
.grid th, .grid td { height: 21px; padding: 0 3px 2px; line-height: 18px; font-weight: 400; overflow: hidden; white-space: nowrap; border-right: 1px solid #d4d4d4; border-bottom: 1px solid #d4d4d4; text-align: left; }
.grid th { background: #e6e6e6; border-color: #bcbcbc; text-align: center; color: #222; padding: 0 0 2px; }
.grid thead th { height: 24px; line-height: 20px; border-bottom-color: #999; }
.grid thead th.on { background: #d2d2d2; color: #217346; border-bottom: 2px solid #217346; padding-bottom: 1px; }
.grid .corner { padding: 0; }
.grid .corner svg { margin: 4px 3px 0 auto; }
.grid tbody th { border-right-color: #999; }
.grid tbody th.on { background: #d2d2d2; color: #217346; border-right: 2px solid #217346; }
.grid .first > * { height: 37px; }
.grid .first th { vertical-align: bottom; }
.grid .head { position: relative; background: #ff0; border-color: #000; color: #120058; text-align: center; font: 700 13px/16px "Liberation Sans", sans-serif; padding: 0; }
.grid .cur { background: #eaf011; }
.grid .small { font-size: 12px; }
.mark { position: absolute; right: 0; top: 0; border: 3px solid #c9303e; border-left-color: transparent; border-bottom-color: transparent; }
.grid .name { background: #6ff; border-color: #6ff; font: 700 16px/18px "Liberation Sans", sans-serif; }
.grid .num { text-align: center; font-family: "Liberation Sans", sans-serif; }
.grid .flag { background: linear-gradient(135deg, #118a11 0 5px, transparent 5px) #fff; }
.grid .right { text-align: right; }
.grid .age { background: #e8eef9; }
.grid .picked { background: #c6c6c6; border-bottom-color: #a8a8ac; }
.grid .lookup { text-align: center; background: #f9eaea; border-color: #000; font-family: "Liberation Sans", sans-serif; }
.grid .tt { text-align: center; font: 700 16px/18px "Liberation Sans", sans-serif; border-color: #000; padding-right: 14px; box-shadow: -1px -1px #000; }
.grid .filter { background: #5b9bd5; color: #fff; font-weight: 700; padding: 0 0 0 3px; }
.filter div { display: flex; justify-content: space-between; }
.filter button { width: 20px; height: 20px; background: #fbfbfd; border: 1px solid #b8b8b8; }
.krange { position: absolute; left: 1000px; top: 24px; bottom: 0; width: 97px; border: solid #3a6fc4; border-width: 0 2px; display: flex; justify-content: space-between; margin-bottom: -1px; }
.krange i { width: 6px; height: 4px; background: #3a6fc4; margin: 0 -4px; border-bottom: 1px solid #fff; }
.edit { position: absolute; left: 1098px; top: 61px; width: 102px; height: 20px; background: #fff; overflow: hidden; display: flex; justify-content: flex-end; line-height: 18px; white-space: nowrap; }
.edit span { margin-right: -6px; }
.lrange { position: absolute; left: 1095px; top: 59px; width: 107px; height: 129px; border: 2px solid #217346; }
.lrange::after { content: ""; position: absolute; right: -3px; bottom: -3px; width: 4px; height: 4px; background: #217346; border: solid #fff; border-width: 1px 0 0 1px; box-sizing: content-box; }
.rrange { position: absolute; left: 1301px; top: 122px; width: 191px; height: 213px; border: 2px solid #c9303e; box-shadow: inset 0 0 0 1px #fff; }
.rrange::after { content: ""; position: absolute; right: 1px; bottom: 1px; width: 4px; height: 4px; border: solid #44579f; border-width: 0 2px 2px 0; }
.tip { position: absolute; left: 333px; top: 3px; height: 21px; min-width: 487px; padding: 0 6px; border: 1px solid #bbb; background: #fff; box-shadow: 1px 2px 3px #0003; line-height: 18px; font-family: "Noto Sans", "Open Sans", sans-serif; font-size: 14px; color: #555; white-space: nowrap; }
.note { position: absolute; left: 1246px; top: 343px; width: 341px; height: 274px; padding: 6px 11px; background: #ff0; border: 1px solid #bfbf6a; font-size: 17px; line-height: 22px; white-space: nowrap; }
.note p { margin: 0 0 46px; }
.vscroll { flex: none; width: 26px; padding: 2px 3px 0 4px; display: flex; flex-direction: column; border-left: 1px solid #999; }
.vscroll button, .vscroll .thumb { height: 19px; background: #fff; border: 1px solid #ababab; }
.vscroll .track { flex: 1; background: #dadada; }

.sheets { flex: none; display: flex; height: 29px; font-size: 16px; color: #555; }
.arrows { width: 102px; display: flex; padding-left: 28px; gap: 22px; border-right: 1px solid #999; height: 20px; margin-top: 4px; }
.stab { height: 29px; padding-bottom: 8px; background: linear-gradient(#999, #999) right 4px / 1px 20px no-repeat; }
.stab.on { background: #fff; color: #217346; font-weight: 700; border-bottom: 2px solid #217346; height: 26px; padding-bottom: 3px; }
.add { margin-left: 33px; }
.hscroll { display: flex; align-items: stretch; width: 746px; height: 19px; margin: 5px 25px 0 0; }
.hscroll .dots { margin: 3px 15px 2px 0; }
.hscroll button { width: 19px; background: #fff; border: 1px solid #ababab; }
.hscroll .thumb { width: 511px; background: #fff; border: 1px solid #ababab; }
.hscroll .track { flex: 1; background: #dadada; }

.status { flex: none; height: 28px; background: #f1f1f1; border-top: 1px solid #bbb; border-bottom: 1px solid #aebcc2; display: flex; align-items: center; padding: 0 8px 0 7px; font-size: 12px; color: #444; }
.pct { width: 50px; color: #b0b0b0; font-size: 13px; }
.status input { appearance: none; width: 125px; height: 12px; margin: 0 4px; background: linear-gradient(#aaa, #aaa) center / 100% 1px no-repeat, linear-gradient(#aaa, #aaa) center / 1px 7px no-repeat; }
.status input::-webkit-slider-thumb { appearance: none; width: 1px; height: 1px; }
.views { display: flex; gap: 27px; margin-left: 17px; }
.sums { display: flex; gap: 16px; margin-left: 34px; }
.mode { margin-left: 22px; }

.taskbar { flex: none; height: 59px; display: flex; align-items: stretch; background: linear-gradient(90deg, #dfe7ea, #d6ebf2 25%, #d6ebf2 80%, #dce9f2); color: #222; }
.weather, .tray { flex: 1; }
.weather { justify-content: flex-start; padding: 0 0 2px 25px; gap: 9px; font-size: 14px; line-height: 21px; text-align: left; }
.weather em { font-style: normal; color: #666; font-size: 15px; line-height: 18px; }
.apps { display: flex; align-items: center; }
.app-btn { position: relative; width: 55px; height: 49px; }
.search { display: flex; align-items: center; gap: 12px; width: 273px; height: 39px; margin: 0 3px 0 5px; padding: 0 13px 1px; border: 1px solid #cbdde4; border-radius: 20px; background: #f5fafc; }
.search input::placeholder { color: #5e5560; opacity: 1; }
.run::after { content: ""; position: absolute; bottom: 0; width: 8px; height: 4px; border-radius: 2px; background: #888; }
.tile { width: 48px; margin: 0 4px 0 3px; background: #f0f8fb; border-radius: 5px; }
.tile::after { content: ""; position: absolute; bottom: 0; width: 20px; height: 4px; border-radius: 2px; background: #208ba0; }
.tray { display: flex; justify-content: flex-end; align-items: center; padding: 0 25px 2px 0; font-size: 14px; }
.lang { width: 76px; }
.net { gap: 10px; width: 80px; }
.clock { width: 90px; line-height: 20px; text-align: right; justify-content: flex-end; }
.badge { margin-left: 14px; width: 20px; height: 20px; border-radius: 50%; background: #1f8797; color: #fff; font-size: 12px; font-weight: 700; }

.mark-logo { position: absolute; left: 44%; bottom: 22px; width: 230px; display: flex; flex-direction: column; align-items: center; color: #b4b4b470; pointer-events: none; white-space: nowrap; }
.mark-logo b { font-family: "DejaVu Sans", sans-serif; font-size: 66px; line-height: 70px; }
.mark-logo span { font: 700 37px/38px "Liberation Sans", sans-serif; }
</style>
